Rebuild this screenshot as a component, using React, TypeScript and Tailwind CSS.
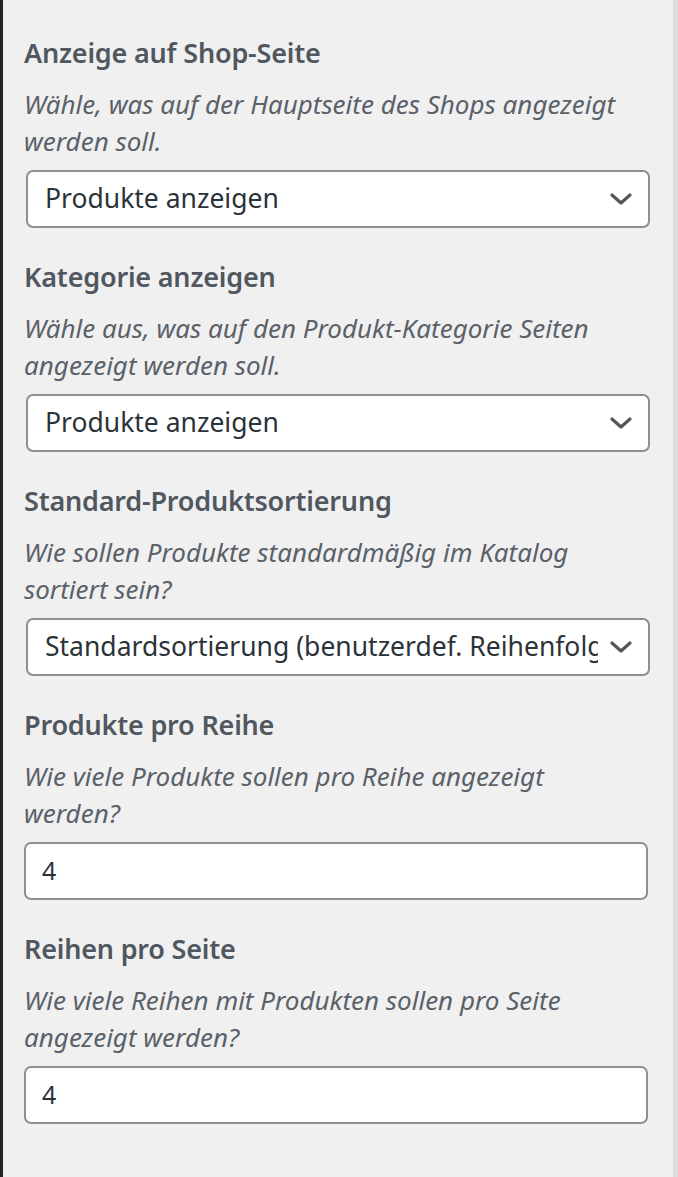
import React from "react";

const font = { fontFamily: '"Noto Sans", "Open Sans", sans-serif' };

function Chevron() {
  return (
    <svg width="22" height="14" viewBox="0 0 22 14" fill="none" className="shrink-0">
      <path d="M2 3 L11 11 L20 3" stroke="#50575e" strokeWidth="3.2" strokeLinecap="round" strokeLinejoin="round" />
    </svg>
  );
}

function Heading({ children }: { children: React.ReactNode }) {
  return <div className="text-[27px] leading-[36px] font-semibold text-[#50575e] tracking-[-0.2px]">{children}</div>;
}

function Desc({ children }: { children: React.ReactNode }) {
  return <div className="mt-[15px] text-[26px] leading-[37px] italic text-[#5a6168]">{children}</div>;
}

function Select({ value }: { value: string }) {
  return (
    <div className="mt-[10px] ml-[2px] w-[624px] h-[58px] bg-white border-2 border-[#8c8f94] rounded-[7px] flex items-center pl-[17px] pr-[16px]">
      <div className="flex-1 overflow-hidden whitespace-nowrap text-[26.5px] text-[#2c3338]">{value}</div>
      <div className="ml-[12px]"><Chevron /></div>
    </div>
  );
}

function Input({ value }: { value: string }) {
  return (
    <div className="mt-[10px] w-[624px] h-[58px] bg-white border-2 border-[#8c8f94] rounded-[7px] flex items-center pl-[16px]">
      <div className="text-[25px] text-[#2c3338]">{value}</div>
    </div>
  );
}

export default function App() {
  return (
    <div style={font} className="w-[678px] h-[1177px] bg-[#f0f0f1] flex overflow-hidden">
      <div className="w-[3px] bg-[#1d2327] shrink-0" />
      <div className="flex-1 pl-[21px] pt-[35px]">
        <Heading>Anzeige auf Shop-Seite</Heading>
        <Desc>Wähle, was auf der Hauptseite des Shops angezeigt<br />werden soll.</Desc>
        <Select value="Produkte anzeigen" />

        <div className="mt-[31px]">
          <Heading>Kategorie anzeigen</Heading>
          <Desc>Wähle aus, was auf den Produkt-Kategorie Seiten<br />angezeigt werden soll.</Desc>
          <Select value="Produkte anzeigen" />
        </div>

        <div className="mt-[31px]">
          <Heading>Standard-Produktsortierung</Heading>
          <Desc>Wie sollen Produkte standardmäßig im Katalog<br />sortiert sein?</Desc>
          <Select value="Standardsortierung (benutzerdef. Reihenfolge + Name)" />
        </div>

        <div className="mt-[31px]">
          <Heading>Produkte pro Reihe</Heading>
          <Desc>Wie viele Produkte sollen pro Reihe angezeigt<br />werden?</Desc>
          <Input value="4" />
        </div>

        <div className="mt-[31px]">
          <Heading>Reihen pro Seite</Heading>
          <Desc>Wie viele Reihen mit Produkten sollen pro Seite<br />angezeigt werden?</Desc>
          <Input value="4" />
        </div>
      </div>
      <div className="w-[5px] bg-[#dcdcde] shrink-0" />
    </div>
  );
}
